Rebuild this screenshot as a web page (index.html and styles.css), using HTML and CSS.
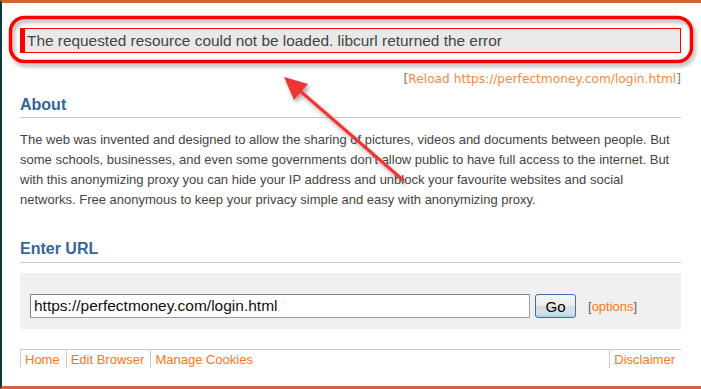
FILE: index.html
```html
<!DOCTYPE html>
<html lang="en">
<head>
    <meta charset="UTF-8">
    <title>Proxy</title>
    <link rel="stylesheet" href="styles.css">
</head>
<body>
    <div class="page">
        <div class="error">The requested resource could not be loaded. libcurl returned the error</div>
        <div class="reload">[<a href="#">Reload https://perfectmoney.com/login.html</a>]</div>

        <h2 class="section-title">About</h2>
        <p class="about-text">The web was invented and designed to allow the sharing of pictures, videos and documents between people. But some schools, businesses, and even some governments don't allow public to have full access to the internet. But with this anonymizing proxy you can hide your IP address and unblock your favourite websites and social networks. Free anonymous to keep your privacy simple and easy with anonymizing proxy.</p>

        <h2 class="section-title">Enter URL</h2>
        <form class="url-box">
            <input type="text" class="url-input" value="https://perfectmoney.com/login.html">
            <button type="button" class="go-btn">Go</button>
            <span class="options">[<a href="#">options</a>]</span>
        </form>

        <ul class="footer">
            <li><a href="#">Home</a></li>
            <li><a href="#">Edit Browser</a></li>
            <li><a href="#">Manage Cookies</a></li>
            <li class="push"><a href="#">Disclaimer</a></li>
        </ul>
    </div>

    <!-- screenshot annotation drawn on top -->
    <svg class="annotation" width="701" height="389" viewBox="0 0 701 389">
        <defs>
            <filter id="shadow" x="-10%" y="-10%" width="120%" height="130%">
                <feDropShadow dx="2" dy="3" stdDeviation="2" flood-color="#000" flood-opacity="0.35"/>
            </filter>
        </defs>
        <rect x="10.5" y="17.5" width="681" height="44" rx="14" ry="14" fill="none" stroke="#ff0000" stroke-width="3.5" filter="url(#shadow)"/>
        <g filter="url(#shadow)">
            <line x1="403" y1="180" x2="299" y2="90" stroke="#f03434" stroke-width="3" stroke-linecap="round"/>
            <polygon points="284,77 308,84 294,100" fill="#f03434"/>
        </g>
    </svg>
</body>
</html>
```

FILE: styles.css
```css
body {
    margin: 0;
    padding: 0;
    background: #fff;
    font-family: 'Liberation Sans', Arial, sans-serif;
}
.page {
    box-sizing: border-box;
    width: 701px;
    height: 389px;
    border-left: 2px solid #0d3a3a;
    border-top: 3px solid #cc6633;
    border-bottom: 3px solid #cc6633;
    padding: 25px 20px 0 18px;
}
.error {
    background: #e9e9e9;
    border: 1px solid #ff0000;
    border-left: 5px solid #ff0000;
    color: #444;
    font-size: 15.4px;
    line-height: 23px;
    padding-left: 2px;
}
.reload {
    margin-top: 18px;
    text-align: right;
    font-family: 'DejaVu Sans', Verdana, sans-serif;
    font-size: 12.2px;
    line-height: 16px;
    color: #777;
}
.reload a, .options a, .footer a {
    color: #ff7711;
    text-decoration: none;
}
.reload a {
    color: #f58a3c;
}
.section-title {
    margin: 8px 0 0 0;
    padding-bottom: 2px;
    border-bottom: 1px solid #cccccc;
    color: #336699;
    font-size: 16px;
    line-height: 20px;
    font-weight: bold;
}
.about-text {
    margin: 12px 0 0 0;
    color: #444;
    font-size: 13px;
    line-height: 20px;
}
.about-text + .section-title {
    margin-top: 29px;
    padding-bottom: 3px;
}
.url-box {
    display: flex;
    align-items: center;
    margin: 10px 0 0 0;
    padding: 21px 10px 11px 10px;
    background: #f0f0f0;
}
.url-input {
    box-sizing: border-box;
    width: 500px;
    height: 24px;
    margin: 0;
    padding: 0 3px;
    border: 1px solid #a0a0a0;
    border-top-color: #808080;
    border-left-color: #808080;
    background: #fff;
    color: #111;
    font-family: 'Liberation Sans', Arial, sans-serif;
    font-size: 15.5px;
}
.go-btn {
    box-sizing: border-box;
    width: 41px;
    height: 24px;
    margin-left: 5px;
    padding: 0;
    border: 1px solid #3c6fae;
    border-radius: 3px;
    background: linear-gradient(#f6f6f6 0%, #ececec 48%, #dcdcdc 52%, #cfe3ee 85%, #a9d1e6 100%);
    color: #000;
    font-family: 'Liberation Sans', Arial, sans-serif;
    font-size: 15px;
}
.options {
    margin-left: 12px;
    color: #666;
    font-size: 13px;
}
.footer {
    display: flex;
    list-style: none;
    margin: 20px 0 0 0;
    padding: 0;
    border-top: 1px solid #cccccc;
    font-size: 13px;
    line-height: 17px;
}
.footer li {
    border-left: 1px solid #cccccc;
    padding: 1px 6px 0 4px;
}
.footer .push {
    margin-left: auto;
}
.annotation {
    position: absolute;
    left: 0;
    top: 0;
    pointer-events: none;
}
```
